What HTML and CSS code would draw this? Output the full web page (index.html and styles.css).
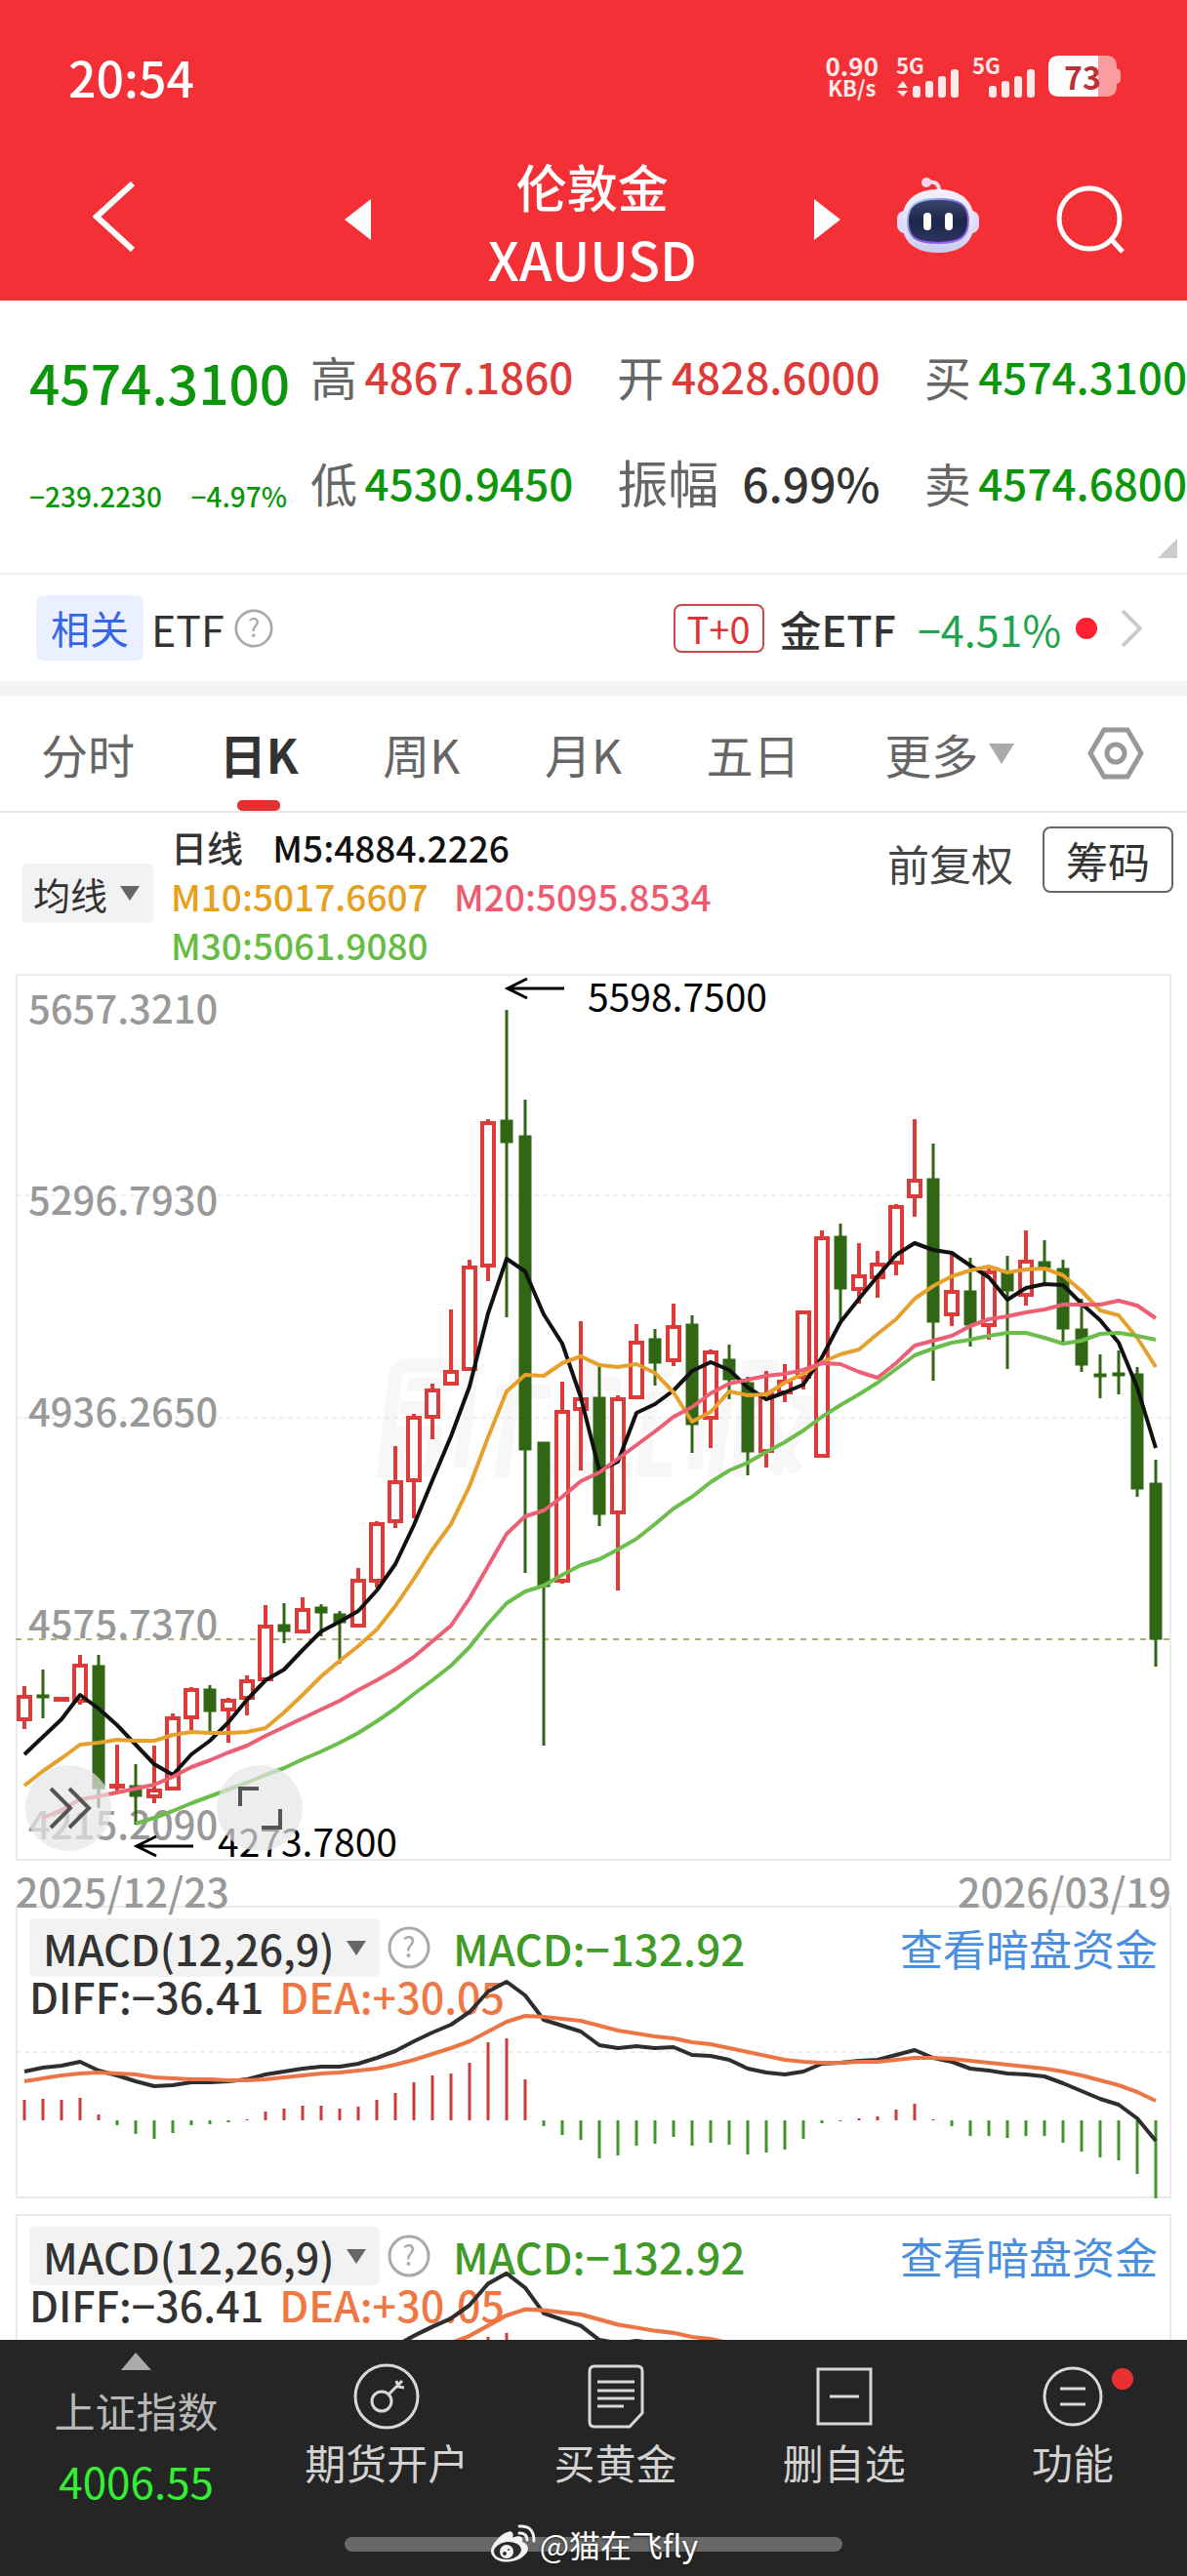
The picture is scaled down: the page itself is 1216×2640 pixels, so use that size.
FILE: index.html
```html
<!DOCTYPE html>
<html lang="zh-CN">
  <head>
    <meta charset="UTF-8">
    <meta name="viewport" content="width=device-width, initial-scale=1">
    <title>伦敦金 XAUUSD</title>
    <link rel="stylesheet" href="styles.css">
  </head>
  <body>
    <header class="header">
      <div class="status">
        <span class="clock">20:54</span>
        <div class="status-right">
          <div class="speed"><span>0.90</span><span class="unit">KB/s</span></div>
          <div class="signal">
            <span>5G</span>
            <svg viewBox="0 0 66 30" width="66" height="30">
              <path d="M1 20 L7 13 L12 20 Z M1 23 L12 23 L7 29 Z"/>
              <rect x="17" y="18" width="8" height="12" rx="3"/>
              <rect x="30" y="13" width="8" height="17" rx="3"/>
              <rect x="43" y="8" width="8" height="22" rx="3"/>
              <rect x="56" y="1" width="8" height="29" rx="3"/>
            </svg>
          </div>
          <div class="signal">
            <span>5G</span>
            <svg viewBox="0 0 66 30" width="66" height="30">
              <rect x="17" y="18" width="8" height="12" rx="3"/>
              <rect x="30" y="13" width="8" height="17" rx="3"/>
              <rect x="43" y="8" width="8" height="22" rx="3"/>
              <rect x="56" y="1" width="8" height="29" rx="3"/>
            </svg>
          </div>
          <div class="battery">
            <svg viewBox="0 0 75 42" width="75" height="42">
              <path d="M50 0 H59 Q70 0 70 11 V13 Q74 14 74 18 V24 Q74 28 70 29 V31 Q70 42 59 42 H50 Z" fill="#fb9c9e"/>
              <path d="M51 0 H11 Q0 0 0 11 V31 Q0 42 11 42 H51 Z" fill="#fff"/>
            </svg>
            <span>73</span>
          </div>
        </div>
      </div>
      <div class="title-bar">
        <div class="title-left">
          <button class="icon-btn back" aria-label="返回">
            <svg viewBox="0 0 44 72" width="44" height="72"><path d="M41 2 L4 36 L41 70" fill="none" stroke="#fff" stroke-width="6"/></svg>
          </button>
          <button class="icon-btn" aria-label="上一个">
            <svg viewBox="0 0 27 42" width="27" height="42"><path d="M27 0 V42 L0 21 Z" fill="#fff"/></svg>
          </button>
        </div>
        <h1 class="title"><span>伦敦金</span><span class="code">XAUUSD</span></h1>
        <div class="title-right">
          <button class="icon-btn" aria-label="下一个">
            <svg viewBox="0 0 27 42" width="27" height="42"><path d="M0 0 V42 L27 21 Z" fill="#fff"/></svg>
          </button>
          <button class="icon-btn robot" aria-label="智能助手">
            <svg viewBox="0 0 84 78" width="84" height="78">
              <defs>
                <linearGradient id="shell" x1="0" y1="0" x2="0" y2="1">
                  <stop offset="0" stop-color="#f6f0fb"/><stop offset="0.7" stop-color="#dcdcf8"/><stop offset="1" stop-color="#c9cbee"/>
                </linearGradient>
                <linearGradient id="rim" x1="0" y1="0" x2="1" y2="1">
                  <stop offset="0" stop-color="#9fe0ee"/><stop offset="0.5" stop-color="#7a5ae0"/><stop offset="1" stop-color="#a06cf0"/>
                </linearGradient>
                <linearGradient id="face" x1="0" y1="0" x2="0" y2="1">
                  <stop offset="0" stop-color="#3c456c"/><stop offset="0.5" stop-color="#1c2748"/><stop offset="1" stop-color="#2e3560"/>
                </linearGradient>
              </defs>
              <path d="M30 5 Q43 2 43 14" fill="none" stroke="#f3dcec" stroke-width="4"/>
              <circle cx="30" cy="5" r="5" fill="#f0d8ec"/>
              <rect x="0" y="34" width="84" height="23" rx="8" fill="#e3dcf8"/>
              <path d="M42 12 C64 12 79 23 79 45 C79 66 66 77 42 77 C18 77 5 66 5 45 C5 23 20 12 42 12 Z" fill="url(#shell)"/>
              <path d="M42 22 C64 22 73 28 73 44 C73 61 65 67 42 67 C19 67 11 61 11 44 C11 28 20 22 42 22 Z" fill="url(#face)" stroke="url(#rim)" stroke-width="2"/>
              <rect x="27" y="36" width="8" height="18" rx="4" fill="#fff"/>
              <rect x="49" y="36" width="8" height="18" rx="4" fill="#fff"/>
            </svg>
          </button>
          <button class="icon-btn" aria-label="搜索">
            <svg viewBox="0 0 70 70" width="70" height="70" fill="none" stroke="#fff" stroke-width="5"><circle cx="34" cy="34" r="31"/><path d="M56 55 L68 68"/></svg>
          </button>
        </div>
      </div>
    </header>

    <main class="content">
      <section class="quote">
        <div class="quote-main">
          <strong class="price down">4574.3100</strong>
          <div class="change down"><span>−239.2230</span><span>−4.97%</span></div>
        </div>
        <dl class="quote-grid">
          <div class="quote-cell"><dt>高</dt><dd class="up">4867.1860</dd></div>
          <div class="quote-cell"><dt>开</dt><dd class="up">4828.6000</dd></div>
          <div class="quote-cell"><dt>买</dt><dd class="down">4574.3100</dd></div>
          <div class="quote-cell"><dt>低</dt><dd class="down">4530.9450</dd></div>
          <div class="quote-cell large"><dt>振幅</dt><dd>6.99%</dd></div>
          <div class="quote-cell"><dt>卖</dt><dd class="down">4574.6800</dd></div>
        </dl>
        <svg class="fold" viewBox="0 0 20 20" width="20" height="20"><path d="M20 0 V20 H0 Z" fill="#ccc"/></svg>
      </section>

      <a class="etf" href="#etf">
        <span class="tag">相关</span>
        <span class="etf-label">ETF</span>
        <svg class="help" viewBox="0 0 44 44" width="40" height="40"><circle cx="22" cy="22" r="20"/><text x="22" y="32">?</text></svg>
        <span class="t0">T+0</span>
        <span class="etf-name">金ETF</span>
        <span class="etf-change">−4.51%</span>
        <span class="dot"></span>
        <svg viewBox="0 0 22 38" width="22" height="38"><path d="M2 1 L20 19 L2 37" fill="none" stroke="#ccc" stroke-width="4"/></svg>
      </a>

      <nav class="tabs">
        <button class="tab">分时</button>
        <button class="tab active">日K</button>
        <button class="tab">周K</button>
        <button class="tab">月K</button>
        <button class="tab">五日</button>
        <span class="picker more"><select aria-label="更多周期"><option>更多</option></select></span>
        <button class="icon-btn" aria-label="设置">
          <svg viewBox="0 0 58 54" width="58" height="54" fill="none" stroke="#999" stroke-width="5" stroke-linejoin="round"><path d="M17 3 H41 L55 27 L41 51 H17 L3 27 Z"/><circle cx="29" cy="27" r="9"/></svg>
        </button>
      </nav>

      <section class="averages">
        <span class="picker gray"><select aria-label="主图指标"><option>均线</option></select></span>
        <div class="ma-list">
          <span class="ma-day">日线</span>
          <span class="m5">M5:4884.2226</span>
          <br>
          <span class="m10">M10:5017.6607</span>
          <span class="m20">M20:5095.8534</span>
          <br>
          <span class="m30">M30:5061.9080</span>
        </div>
        <button class="adjust">前复权</button>
        <button class="chips">筹码</button>
      </section>

      <section class="kline">
        <svg id="kline" viewBox="0 0 1184 909">
          <!-- faint brand mark behind the candles -->
          <g fill="none" stroke="#f7f7f7" stroke-width="14">
            <path d="M377 516 L389 412 Q391 401 402 401 H468 L455 506"/>
            <path d="M402 421 H448 M394 445 H440 M396 470 H430 L426 508 H390 Z"/>
            <path d="M516 394 L497 516 M492 428 H548 M560 420 H620 M590 396 L576 510 M545 508 H632"/>
            <path d="M660 400 L672 412 M668 435 H652 L643 508 H672 M680 404 H728 M704 404 L696 508 M728 430 L716 514"/>
            <path d="M752 396 L740 516 M752 402 H782 M750 438 H778 M798 402 H824 M796 440 H818 L776 512 M768 450 L800 510"/>
          </g>
          <rect class="frame" x="1" y="1" width="1182" height="907"/>
          <path class="grid" d="M0 227 H1184 M0 455 H1184"/>
          <path d="M0 682 H1184" stroke="#b9aa80" stroke-width="2" stroke-dasharray="6 6"/>
          <g class="axis">
            <text x="13" y="51">5657.3210</text>
            <text x="13" y="247">5296.7930</text>
            <text x="13" y="464">4936.2650</text>
            <text x="13" y="681">4575.7370</text>
            <text x="13" y="887">4215.2090</text>
          </g>
          <g id="candles"></g>
          <path d="M562 15 H503 M524 5 L504 15 L524 25" fill="none" stroke="#000" stroke-width="3"/>
          <text class="mark" x="586" y="39">5598.7500</text>
          <path d="M182 894 H123 M144 884 L124 894 L144 904" fill="none" stroke="#000" stroke-width="3"/>
          <text class="mark" x="207" y="905">4273.7800</text>
        </svg>
        <div class="chart-tools">
          <button class="round" aria-label="展开">
            <svg viewBox="0 0 88 88" width="88" height="88"><path d="M26 24 L46 44 L26 64 M45 24 L65 44 L45 64"/></svg>
          </button>
          <button class="round" aria-label="全屏">
            <svg viewBox="0 0 88 88" width="88" height="88"><path d="M24 42 V24 H43 M46 64 H65 V45"/></svg>
          </button>
        </div>
      </section>
      <div class="dates"><time>2025/12/23</time><time>2026/03/19</time></div>

      <section class="macd">
        <div class="macd-info">
          <div class="macd-head">
            <span class="picker gray"><select aria-label="副图指标一"><option>MACD(12,26,9)</option></select></span>
            <svg class="help" viewBox="0 0 44 44" width="44" height="44"><circle cx="22" cy="22" r="20"/><text x="22" y="32">?</text></svg>
            <span class="macd-value">MACD:−132.92</span>
            <a href="#funds">查看暗盘资金</a>
          </div>
          <div class="macd-sub"><span>DIFF:−36.41</span><span class="dea">DEA:+30.05</span></div>
        </div>
        <svg class="macd-chart" viewBox="0 0 1184 300">
          <rect class="frame" x="1" y="1" width="1182" height="298"/>
          <path class="grid" d="M0 150 H1184"/>
          <g class="macd-plot"></g>
        </svg>
      </section>

      <section class="macd">
        <div class="macd-info">
          <div class="macd-head">
            <span class="picker gray"><select aria-label="副图指标二"><option>MACD(12,26,9)</option></select></span>
            <svg class="help" viewBox="0 0 44 44" width="44" height="44"><circle cx="22" cy="22" r="20"/><text x="22" y="32">?</text></svg>
            <span class="macd-value">MACD:−132.92</span>
            <a href="#funds">查看暗盘资金</a>
          </div>
          <div class="macd-sub"><span>DIFF:−36.41</span><span class="dea">DEA:+30.05</span></div>
        </div>
        <svg class="macd-chart" viewBox="0 0 1184 316">
          <rect class="frame" x="1" y="1" width="1182" height="314"/>
          <g class="macd-plot" transform="translate(0 -21) scale(1 1.05)"></g>
        </svg>
      </section>
    </main>

    <footer class="bottom">
      <nav class="bottom-nav">
        <a class="index" href="#index">
          <svg viewBox="0 0 31 18" width="31" height="18"><path d="M15 0 L31 18 H0 Z" fill="#aaa"/></svg>
          <span>上证指数</span>
          <span class="index-value">4006.55</span>
        </a>
        <a class="nav-item" href="#open">
          <svg viewBox="0 0 68 68" width="68" height="68"><circle cx="34" cy="34" r="32"/><circle cx="29" cy="39" r="10"/><path d="M36 32 L50 18 M44 18 L46 24 L52 25"/></svg>
          <span>期货开户</span>
        </a>
        <a class="nav-item" href="#gold">
          <svg viewBox="0 0 68 68" width="68" height="68"><path d="M12 3 H56 Q61 3 61 8 V51 L48 65 H12 Q7 65 7 60 V8 Q7 3 12 3 Z M15 19 H53 M15 28 H53 M15 36 H53 M15 44 H42"/></svg>
          <span>买黄金</span>
        </a>
        <a class="nav-item" href="#remove">
          <svg viewBox="0 0 68 68" width="68" height="68"><path d="M7 6 H61 V62 H7 Z M19 34 H49"/></svg>
          <span>删自选</span>
        </a>
        <a class="nav-item" href="#tools">
          <svg viewBox="0 0 68 68" width="68" height="68"><circle cx="34" cy="34" r="29"/><path d="M21 26 H47 M21 42 H47"/></svg>
          <span>功能</span>
          <i class="badge"></i>
        </a>
      </nav>
      <div class="home">
        <div class="home-bar"></div>
        <div class="author">
          <svg viewBox="0 0 48 40" width="48" height="40">
            <path d="M19 8 C23 6 26 9 24 14 C30 11 36 12 34 18 C41 20 42 27 36 32 C29 39 14 41 6 35 C-1 29 2 23 8 16 C11 12 15 9 19 8 Z" fill="#f2f2f2"/>
            <ellipse cx="19" cy="27" rx="14" ry="9" fill="#2b2b2b" transform="rotate(-6 19 27)"/>
            <circle cx="18" cy="28" r="7" fill="#f2f2f2"/>
            <circle cx="16" cy="30" r="2" fill="#2b2b2b"/><circle cx="20" cy="26" r="1" fill="#2b2b2b"/>
            <path d="M31 2 Q46 1 46 17 M31 9 Q39 9 39 16" fill="none" stroke="#f2f2f2" stroke-width="3" stroke-linecap="round"/>
          </svg>
          <span>@猫在飞fly</span>
        </div>
      </div>
    </footer>
    <script src="script.js"></script>
  </body>
</html>
```
FILE: styles.css
```css
* {
  box-sizing: border-box;
}

body {
  margin: 0;
  height: 100vh;
  display: flex;
  flex-direction: column;
  overflow: hidden;
  background: #fff;
  color: #333;
  font-family: "Noto Sans CJK SC", "Noto Sans", sans-serif;
}

button, select {
  font: inherit;
  color: inherit;
  border: none;
  background: none;
  padding: 0;
  cursor: pointer;
}

a {
  color: inherit;
  text-decoration: none;
}

svg {
  display: block;
  flex: none;
}

.up { color: #dd3b39; }
.down { color: #0b960b; }

/* Header */
.header {
  flex: none;
  background: #f23035;
  color: #fff;
}

.status {
  display: flex;
  justify-content: space-between;
  align-items: center;
  height: 150px;
  padding: 6px 67px 0 70px;
}

.clock {
  font-size: 50px;
  font-weight: 500;
}

.status-right {
  display: flex;
  align-items: center;
  gap: 12px;
}

.speed {
  display: flex;
  flex-direction: column;
  align-items: center;
  margin-right: 6px;
  font-size: 26px;
  line-height: 23px;
  font-weight: 700;
  color: #ffe9e9;
}

.unit { font-size: 22px; }

/* The network label sits above the short bars */
.signal {
  display: grid;
  fill: #ffe9e9;
  color: #ffe9e9;
}

.signal span, .signal svg {
  grid-area: 1 / 1;
}

.signal span {
  align-self: start;
  font-size: 22px;
  line-height: 20px;
  font-weight: 700;
}

.signal svg { margin-top: 14px; }

.battery {
  display: grid;
  align-items: center;
}

.battery svg, .battery span {
  grid-area: 1 / 1;
}

.battery span {
  padding-left: 16px;
  font-size: 32px;
  line-height: 42px;
  font-weight: 700;
  color: #bb3136;
}

.title-bar {
  display: grid;
  grid-template-columns: 285fr 455fr 317fr;
  align-items: center;
  height: 158px;
  padding: 0 64px 3px 95px;
}

.title-left {
  display: flex;
  justify-content: space-between;
  align-items: center;
}

.title-right {
  display: flex;
  align-items: center;
}

.title-left, .title-right { padding-bottom: 6px; }

.icon-btn {
  flex: none;
}

.back { margin-bottom: 6px; }

.robot { margin: 0 79px 8px 58px; }

.title {
  display: flex;
  flex-direction: column;
  align-items: center;
  margin: 0;
  font-size: 52px;
  line-height: 74px;
  font-weight: 500;
}

.code { font-size: 54px; }

/* Main area, cut off by the bottom bar */
.content {
  flex: 1;
  min-height: 0;
  overflow: hidden;
}

/* Quote */
.quote {
  position: relative;
  display: flex;
  align-items: flex-start;
  padding: 22px 0 23px 30px;
  border-bottom: 2px solid #eee;
}

.quote-main {
  width: 288px;
  font-weight: 500;
}

.price {
  display: block;
  font-size: 55px;
  line-height: 122px;
  font-weight: 500;
}

.change {
  display: flex;
  justify-content: space-between;
  padding-right: 24px;
  font-size: 28px;
  line-height: 112px;
}

.quote-grid {
  flex: 1;
  display: grid;
  grid-template-columns: repeat(3, 1fr);
  grid-auto-rows: 109px;
  column-gap: 45px;
  margin: 0;
}

.quote-cell {
  display: flex;
  justify-content: space-between;
  align-items: center;
}

.quote-cell dt {
  font-size: 48px;
  color: #666;
}

.quote-cell dd {
  margin: 0;
  font-size: 44px;
  font-weight: 500;
}

.large dt { font-size: 52px; }
.large dd { font-size: 48px; }

.fold {
  position: absolute;
  right: 10px;
  bottom: 15px;
}

/* Related ETF */
.etf {
  display: flex;
  align-items: center;
  height: 124px;
  padding: 0 46px 0 37px;
  border-bottom: 15px solid #f4f4f4;
  font-size: 43px;
}

.tag {
  padding: 0 15px;
  border-radius: 8px;
  background: #eaf0ff;
  color: #3565e8;
  font-size: 40px;
  line-height: 67px;
}

.etf-label { margin: 0 10px 0 8px; }

.help {
  fill: none;
  stroke: #aaa;
  stroke-width: 3;
}

.help text {
  fill: #aaa;
  stroke: none;
  font-size: 28px;
  text-anchor: middle;
}

.t0 {
  margin-left: auto;
  padding: 0 12px;
  border: 2px solid #cc4a45;
  border-radius: 8px;
  color: #df3336;
  font-size: 38px;
  line-height: 46px;
}

.etf-name {
  margin: 0 22px 0 16px;
  font-weight: 500;
}

.etf-change { color: #1ea44e; }

.dot {
  width: 22px;
  height: 22px;
  margin: 0 24px 0 15px;
  border-radius: 50%;
  background: #ff1e32;
}

/* Period tabs */
.tabs {
  display: flex;
  justify-content: space-between;
  align-items: center;
  height: 120px;
  padding: 0 44px 0 42px;
  border-bottom: 2px solid #e8e8e8;
  font-size: 48px;
  color: #666;
}

.tab {
  position: relative;
  line-height: 118px;
}

.tab.active {
  color: #333;
  font-weight: 700;
}

.tab.active::after {
  content: "";
  position: absolute;
  left: 50%;
  bottom: 0;
  width: 44px;
  height: 11px;
  margin-left: -22px;
  border-radius: 5px;
  background: #e83030;
}

/* Drop-downs with a solid triangle */
.picker {
  display: inline-flex;
  align-items: center;
}

.picker select {
  appearance: none;
}

.picker::after {
  content: "";
  margin-left: 12px;
  border: 10px solid transparent;
  border-top: 15px solid #666;
  border-bottom: none;
}

.picker.gray {
  border-radius: 6px;
  background: #f2f2f2;
  color: #333;
}

.picker.more { margin-right: -12px; }

.picker.more::after {
  margin-left: 10px;
  border-width: 21px 13px 0;
  border-top-color: #aaa;
}

/* Moving averages */
.averages {
  display: flex;
  align-items: flex-start;
  height: 165px;
  padding: 10px 14px 0 22px;
  font-size: 38px;
}

.averages .picker {
  height: 61px;
  margin-top: 42px;
  padding: 0 14px 0 12px;
}

.ma-list {
  flex: 1;
  margin-left: 18px;
  font-size: 37px;
  line-height: 50px;
  font-weight: 500;
}

.ma-day { margin-right: 22px; }
.m10 { margin-right: 18px; }
.m5 { color: #111; }
.m10 { color: #e6a020; }
.m20 { color: #ec5b70; }
.m30 { color: #66bd45; }

.adjust {
  margin-right: 30px;
  font-size: 43px;
  line-height: 82px;
  color: #444;
}

.chips {
  margin-top: 4px;
  padding: 0 22px;
  border: 2px solid #666;
  border-radius: 8px;
  font-size: 43px;
  line-height: 64px;
}

/* Candlestick chart */
.kline {
  position: relative;
  margin: 0 16px;
}

.kline > svg, .macd-chart {
  width: 100%;
  height: auto;
}

.frame {
  fill: none;
  stroke: #ebebeb;
  stroke-width: 2;
}

.grid {
  stroke: #e0e0e0;
  stroke-width: 1;
  stroke-dasharray: 5 4;
}

.axis {
  fill: #999;
  font-size: 40px;
  font-weight: 500;
}

.mark {
  fill: #000;
  font-size: 39px;
}

.candle-up {
  fill: #fff;
  stroke: #dd3b39;
  stroke-width: 4;
}

.candle-down {
  fill: #306614;
  stroke: #306614;
  stroke-width: 3;
}

.line {
  fill: none;
  stroke-width: 4;
  stroke-linejoin: round;
}

.chart-tools {
  position: absolute;
  left: 10px;
  bottom: 10px;
  display: flex;
  gap: 108px;
}

.round {
  width: 88px;
  height: 88px;
  border-radius: 50%;
  background: rgba(230, 230, 230, 0.7);
}

.round path {
  fill: none;
  stroke: #555;
  stroke-width: 4;
}

.dates {
  position: relative;
  display: flex;
  justify-content: space-between;
  height: 46px;
  margin: 0 16px;
  font-size: 41px;
  line-height: 60px;
  font-weight: 500;
  color: #999;
}

/* MACD panels */
.macd {
  display: grid;
  margin: 0 16px 16px;
}

.macd-info, .macd-chart {
  grid-area: 1 / 1;
}

.macd-chart { pointer-events: none; }

.macd-info {
  padding: 13px 14px 0;
  font-size: 44px;
}

.macd-head {
  display: flex;
  align-items: center;
  height: 60px;
}

.macd-head .picker {
  height: 60px;
  margin-right: 8px;
  padding: 0 14px;
}

.macd-head .picker select {
  font-size: 43px;
  font-weight: 500;
}

.macd-value {
  margin-left: 23px;
  font-weight: 500;
  color: #3f9a28;
}

.macd-head a {
  margin-left: auto;
  color: #4a8ee0;
}

.macd-sub {
  display: flex;
  gap: 16px;
  font-size: 43px;
  line-height: 38px;
  font-weight: 500;
}

.dea { color: #ef7744; }

.bar-up { stroke: #cc3a3a; stroke-width: 3; }
.bar-down { stroke: #41962a; stroke-width: 3; }

/* Bottom bar */
.bottom {
  flex: none;
  background: #252525;
  color: #d2d2d2;
}

.bottom-nav {
  display: grid;
  grid-template-columns: 279fr repeat(4, 234fr);
  height: 176px;
  font-size: 42px;
}

.index {
  display: flex;
  flex-direction: column;
  align-items: center;
  padding-top: 13px;
  line-height: 72px;
  color: #b8b8b8;
}

.index span:first-of-type { margin-top: 5px; }

.index-value {
  font-size: 44px;
  color: #32f032;
}

.nav-item {
  position: relative;
  display: flex;
  flex-direction: column;
  align-items: center;
  padding-top: 24px;
  line-height: 66px;
}

.nav-item svg {
  fill: none;
  stroke: #d8d8d8;
  stroke-width: 3;
}

.badge {
  position: absolute;
  top: 29px;
  left: 50%;
  width: 22px;
  height: 22px;
  margin-left: 40px;
  border-radius: 50%;
  background: #e83030;
}

.home {
  display: grid;
  place-items: center;
  height: 66px;
}

.home-bar, .author {
  grid-area: 1 / 1;
}

.home-bar {
  width: 42%;
  height: 15px;
  border-radius: 8px;
  background: #686868;
}

.author {
  display: flex;
  align-items: center;
  gap: 4px;
  font-size: 32px;
  line-height: 40px;
  color: #fff;
  text-shadow: 0 1px 3px #222;
}
```
FILE: script.js
```js
const STEP = 19;
const FIRST = 9;

// high, body top, body bottom, low
const candles = [
  ["r", 730, 739, 766, 774], ["g", 713, 739, 743, 763], ["r", 741, 741, 745, 745], ["r", 698, 707, 747, 749],
  ["g", 698, 709, 836, 855], ["r", 790, 830, 835, 841], ["g", 810, 832, 844, 872], ["r", 791, 835, 845, 850],
  ["r", 758, 761, 837, 837], ["r", 731, 732, 764, 775], ["g", 729, 733, 757, 777], ["r", 742, 743, 756, 788],
  ["r", 719, 723, 744, 760], ["r", 647, 667, 725, 725], ["g", 645, 667, 675, 686], ["r", 639, 650, 676, 676],
  ["g", 646, 649, 656, 679], ["g", 653, 656, 666, 707], ["r", 609, 620, 670, 670], ["r", 561, 562, 624, 629],
  ["r", 484, 519, 563, 568], ["r", 451, 453, 521, 558], ["r", 420, 425, 456, 477], ["r", 344, 406, 422, 422],
  ["r", 293, 299, 407, 407], ["r", 149, 151, 301, 315], ["g", 37, 150, 174, 352], ["g", 129, 166, 489, 614],
  ["g", 480, 480, 629, 791], ["r", 418, 447, 624, 625], ["r", 356, 434, 448, 509], ["g", 399, 434, 555, 566],
  ["r", 432, 434, 554, 632], ["r", 359, 376, 436, 436], ["g", 364, 374, 400, 422], ["r", 338, 360, 398, 402],
  ["g", 350, 359, 463, 491], ["r", 385, 386, 457, 486], ["g", 380, 395, 417, 436], ["g", 413, 419, 491, 514],
  ["r", 407, 429, 491, 506], ["r", 400, 416, 431, 439], ["r", 345, 345, 415, 426], ["r", 263, 269, 496, 496],
  ["g", 256, 269, 324, 355], ["r", 276, 308, 325, 338], ["r", 284, 296, 313, 332], ["r", 236, 237, 298, 309],
  ["r", 149, 210, 230, 249], ["g", 174, 210, 358, 417], ["r", 285, 324, 351, 361], ["g", 291, 325, 361, 382],
  ["r", 302, 304, 362, 375], ["g", 289, 305, 326, 405], ["r", 263, 293, 331, 340], ["g", 273, 295, 302, 317],
  ["g", 293, 302, 365, 378], ["g", 333, 364, 402, 408], ["g", 390, 410, 412, 435], ["g", 386, 409, 411, 431],
  ["g", 403, 410, 529, 536], ["g", 498, 522, 683, 710]
];

const m5 = [800, 782, 764, 739, 753, 770, 790, 810, 821, 800, 786, 767, 744, 724, 713, 693, 674, 664, 653, 632, 605, 565, 519, 474, 423, 348, 292, 305, 349, 379, 434, 509, 500, 450, 441, 427, 407, 398, 406, 424, 436, 429, 421, 393, 357, 333, 310, 288, 276, 283, 286, 299, 311, 334, 322, 318, 319, 338, 355, 378, 424, 486];
const m10 = [832, 817, 804, 790, 788, 785, 786, 786, 780, 777, 778, 778, 777, 773, 757, 739, 720, 704, 689, 672, 648, 620, 590, 564, 525, 475, 428, 411, 412, 399, 392, 401, 403, 400, 409, 429, 459, 449, 428, 432, 431, 419, 410, 398, 390, 385, 369, 354, 333, 320, 310, 304, 300, 306, 303, 302, 309, 325, 345, 350, 373, 403];
const m20 = [865, 857, 846, 843, 839, 835, 831, 823, 813, 806, 798, 791, 781, 772, 763, 754, 745, 734, 724, 713, 700, 684, 668, 640, 607, 574, 556, 550, 536, 520, 511, 497, 483, 469, 454, 444, 430, 420, 416, 412, 410, 406, 399, 400, 408, 414, 399, 381, 376, 371, 361, 354, 351, 347, 344, 339, 339, 339, 335, 340, 353];
const m30 = [871, 865, 858, 850, 843, 836, 829, 821, 814, 805, 797, 788, 778, 766, 753, 738, 724, 709, 690, 666, 645, 633, 627, 616, 606, 600, 590, 579, 564, 548, 536, 521, 509, 501, 490, 480, 468, 454, 442, 431, 419, 405, 391, 384, 378, 375, 371, 368, 368, 373, 379, 376, 369, 368, 371, 375];

const diff = [170, 166, 164, 160, 169, 174, 180, 185, 184, 181, 181, 180, 178, 173, 170, 167, 165, 165, 162, 156, 149, 139, 130, 122, 109, 88, 78, 92, 117, 123, 129, 143, 146, 144, 146, 145, 153, 154, 158, 167, 171, 173, 170, 162, 161, 159, 158, 153, 148, 156, 160, 167, 169, 172, 173, 175, 182, 190, 198, 204, 218, 241];
const dea = [180, 177, 174, 172, 171, 172, 173, 176, 177, 178, 178, 179, 179, 178, 176, 174, 172, 171, 169, 167, 163, 158, 152, 146, 139, 129, 119, 113, 114, 116, 118, 123, 128, 131, 134, 136, 140, 142, 146, 150, 154, 158, 160, 161, 161, 160, 160, 158, 156, 156, 157, 159, 161, 163, 165, 167, 170, 174, 179, 184, 191, 200];
const bars = [21, 22, 21, 23, 6, -5, -14, -19, -13, -5, -4, -2, 1, 9, 12, 15, 15, 12, 14, 21, 28, 39, 46, 48, 59, 80, 84, 42, -6, -15, -20, -39, -36, -26, -24, -17, -26, -23, -25, -35, -33, -30, -19, -3, -1, 2, 4, 11, 17, 1, -6, -16, -16, -18, -16, -16, -23, -32, -38, -41, -55, -80];

function xAt(i) {
  return FIRST + i * STEP;
}

// Shorter series end on the last day
function line(values, color) {
  const start = candles.length - values.length;
  const points = values.map((y, i) => xAt(start + i) + "," + y).join(" ");
  return `<polyline class="line" stroke="${color}" points="${points}"/>`;
}

function candle([type, high, top, bottom, low], i) {
  const x = xAt(i);
  if (type === "g") {
    return `<g class="candle-down"><path d="M${x} ${high} V${low}"/><rect x="${x - 5}" y="${top + 1}" width="10" height="${Math.max(bottom - top - 3, 1)}"/></g>`;
  }
  return `<g class="candle-up"><path d="M${x} ${high} V${top} M${x} ${bottom} V${low}"/><rect x="${x - 6}" y="${top + 2}" width="12" height="${Math.max(bottom - top - 4, 1)}"/></g>`;
}

document.getElementById("candles").innerHTML =
  candles.map(candle).join("") +
  line(m5, "#111") +
  line(m10, "#e6a02c") +
  line(m20, "#ec5f74") +
  line(m30, "#6cbd4c");

const zero = 220;
const macd =
  bars.map((v, i) => `<path class="${v > 0 ? "bar-up" : "bar-down"}" d="M${xAt(i)} ${zero} V${zero - v}"/>`).join("") +
  line(diff, "#2e2e2e") +
  line(dea, "#ec7545");

document.querySelectorAll(".macd-plot").forEach(g => {
  g.innerHTML = macd;
});
```
